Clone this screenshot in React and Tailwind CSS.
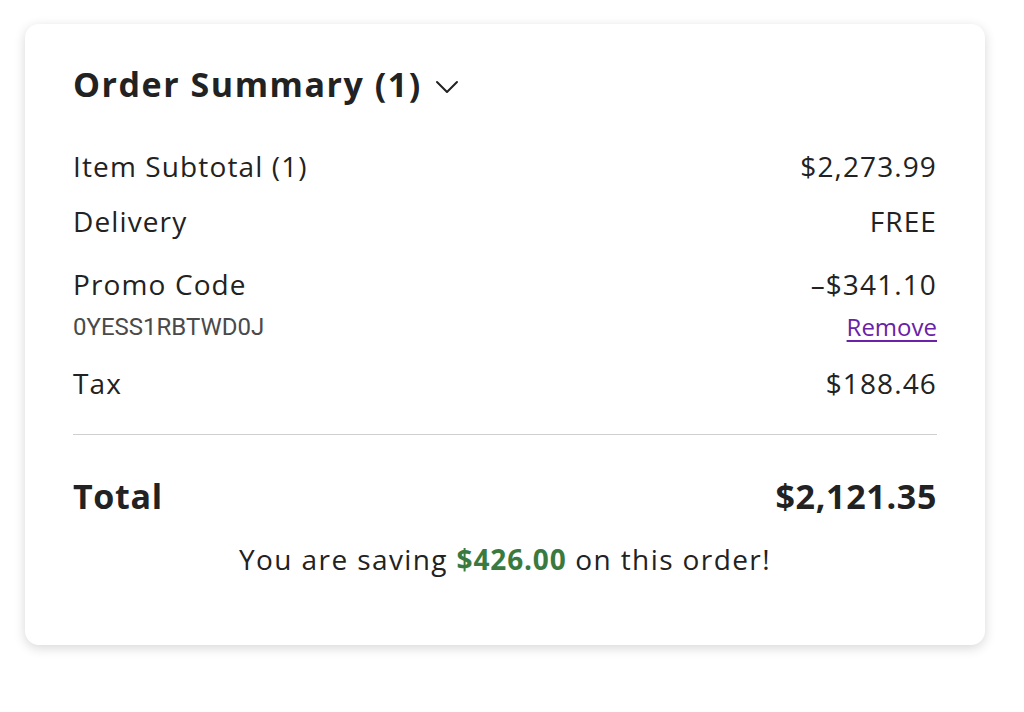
import React from "react";

function Row({ label, value, className = "" }) {
  return (
    <div className={"flex items-center justify-between h-[40px] " + className}>
      <span>{label}</span>
      <span>{value}</span>
    </div>
  );
}

export default function App() {
  return (
    <div className="min-h-screen bg-white px-[25px] pt-[24px] font-['Open_Sans',sans-serif] text-[#222222]">
      <div className="w-[960px] rounded-[14px] bg-white px-[48px] pt-[40px] pb-[68px] shadow-[0_3px_12px_rgba(0,0,0,0.16)]">
        <div className="flex items-center h-[40px] gap-[13px]">
          <h2 className="text-[34px] font-bold leading-[40px] tracking-[0.045em]">Order Summary (1)</h2>
          <svg width="24" height="14" viewBox="0 0 24 14" fill="none" className="mt-[6px]">
            <path d="M2 2l10 10L22 2" stroke="#222222" strokeWidth="2" strokeLinecap="round" strokeLinejoin="round" />
          </svg>
        </div>

        <div className="mt-[42px] text-[28px] tracking-[0.04em]">
          <Row label="Item Subtotal (1)" value="$2,273.99" />
          <Row label="Delivery" value="FREE" className="mt-[15px]" />
          <Row label="Promo Code" value="–$341.10" className="mt-[23px]" />
          <div className="mt-[9px] flex items-center justify-between h-[28px] tracking-normal">
            <span className="font-['Roboto',sans-serif] text-[24px] text-[#4a4a4a]">0YESS1RBTWD0J</span>
            <a href="#" className="text-[24px] text-[#6b21a8] underline underline-offset-[4px]">Remove</a>
          </div>
          <Row label="Tax" value="$188.46" className="mt-[22px]" />
        </div>

        <div className="mt-[31px] border-t border-[#cfcfcf]" />

        <div className="mt-[39px] flex items-center justify-between h-[44px] text-[34px] font-bold tracking-[0.02em]">
          <span>Total</span>
          <span>$2,121.35</span>
        </div>

        <p className="mt-[23px] h-[36px] leading-[36px] text-center text-[28px] tracking-[0.05em]">
          You are saving <span className="font-bold text-[#3b7a3f] tracking-[0.03em]">$426.00</span> on this order!
        </p>
      </div>
    </div>
  );
}
